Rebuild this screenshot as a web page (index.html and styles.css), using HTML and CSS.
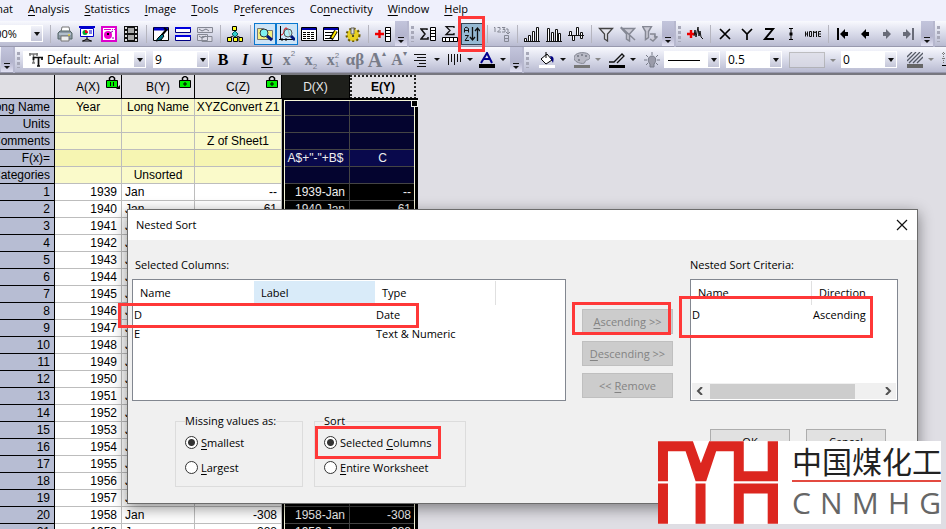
FILE: index.html
```html
<!DOCTYPE html>
<html lang="en">
<head>
<meta charset="utf-8">
<title>Nested Sort</title>
<link rel="stylesheet" href="styles.css">
</head>
<body>
<div class="app">
<nav class="menu">
<a href="#">Format</a><a href="#"><u>A</u>nalysis</a><a href="#"><u>S</u>tatistics</a><a href="#"><u>I</u>mage</a><a href="#"><u>T</u>ools</a><a href="#">P<u>r</u>eferences</a><a href="#">Co<u>n</u>nectivity</a><a href="#"><u>W</u>indow</a><a href="#"><u>H</u>elp</a>
</nav>

<div class="bars">
<div class="bar bar-zoom">
<label class="combo zoom"><select aria-label="Zoom"><option>100%</option></select></label>
<i class="sep wide"></i>
<button class="tb" aria-label="Print"><svg viewBox="0 0 16 16"><path d="M5 1h7l1 5H4z" fill="#fff" stroke="#777"/><path d="M1 7l2-2h10l2 2v6H1z" fill="#8c99a6" stroke="#566"/><path d="M2 8h12" stroke="#d8e4ee"/><path d="M4 10h8v5H4z" fill="#eee" stroke="#777"/><path d="M11 9h2" stroke="#fd0"/></svg></button>
<button class="tb" aria-label="Slide show"><svg viewBox="0 0 16 16"><path d="M0 1h16" stroke="#00c" stroke-width="2"/><path d="M1.500 2.500h13v8h-13z" fill="#fff" stroke="#00c"/><circle cx="6" cy="6.500" r="2.500" fill="#0a3"/><path d="M6 4v3h3a3 3 0 0 0-3-3" fill="#e02"/><path d="M10 5h3M10 7h3" stroke="#00c"/><path d="M8 11v2M4 15l4-2 4 2M3 15h10" stroke="#000" fill="none"/></svg></button>
<button class="tb" aria-label="Open graph"><svg viewBox="0 0 16 16"><path d="M1 1h14v14H1z" fill="#fff" stroke="#d0c" stroke-width="2"/><path d="M3 3.500h7M11 3.500h1M13 3.500h1" stroke="#d0c"/><circle cx="7" cy="9" r="4" fill="#e0c"/><path d="M6 7h2v2H6z" fill="#000"/><path d="M9 7l3-2M11 12h2" stroke="#80a"/></svg></button>
<button class="tb" aria-label="Video"><svg viewBox="0 0 16 16"><path d="M1 0h14v16H1z" fill="#111"/><path d="M5 2h6v5H5zM5 9h6v5H5z" fill="#aaa"/><path d="M3 1v14M13 1v14" stroke="#ddd" stroke-width="2" stroke-dasharray="2 2"/></svg></button>
<i class="sep"></i>
<button class="tb" aria-label="Edit"><svg viewBox="0 0 16 16"><path d="M.5 1.500h15v13H.5z" fill="#fff" stroke="#000"/><path d="M1 3h14" stroke="#00c" stroke-width="3"/><path d="M14 3L9 9M11 2l3 2" stroke="#000" stroke-width="2"/><path d="M9 8l2 2-3 4-5 1 2-3z" fill="#078" stroke="#000"/></svg></button>
<button class="tb" aria-label="Split"><svg viewBox="0 0 16 16"><path d="M.5 1.500h15v5H.5zM.5 9.500h15v5H.5z" fill="#fff" stroke="#000080"/><path d="M0 2h16M0 10h16" stroke="#00d" stroke-width="2"/></svg></button>
<button class="tb" aria-label="Duplicate"><svg viewBox="0 0 16 16"><path d="M.5 1.500h15v5H.5zM.5 8.500h10v6H.5zM5 10.500h10v5H5z" fill="#dddde8" stroke="#858894"/><path d="M2 3l3 2 4-2 3 2M2 10l3 2 4-2" fill="none" stroke="#777b88"/></svg></button>
<i class="sep"></i>
<button class="tb" aria-label="Hierarchy"><svg viewBox="0 0 16 16"><path d="M8 4v5M8 9L2 12M8 9l6 3M8 9v4" stroke="#000"/><path d="M5.500.5h4v4h-4zM.5 11.500h4v4h-4zM6.500 11.500h4v4h-4zM12 11.500h3.500v4H12z" fill="#ffff20" stroke="#000"/><path d="M8 5l3 3-3 3-3-3z" fill="#3cc" stroke="#066"/></svg></button>
<i class="sep"></i>
<button class="tb active" aria-label="Project explorer"><svg viewBox="0 0 16 16"><path d="M.5 2.500h6l1 2h8v9H.5z" fill="#f4f080" stroke="#777"/><circle cx="7" cy="7" r="4" fill="#7ef0f0" stroke="#333"/><path d="M10 10l5 4" stroke="#00147c" stroke-width="3"/></svg></button>
<button class="tb active" aria-label="Quick plot"><svg viewBox="0 0 16 16"><path d="M1.500 0v14M0 13.500h14M3 12v3M7 12v3" stroke="#000"/><path d="M2 9c4 0 2-7 5-7s3 7 4 8" fill="none" stroke="#d00"/><circle cx="9" cy="7" r="4" fill="#a7f5f5" fill-opacity=".7" stroke="#555"/><path d="M12 10l4 4" stroke="#00147c" stroke-width="3"/></svg></button>
<button class="tb" aria-label="Results log"><svg viewBox="0 0 16 16"><path d="M.5 1.500h15v13H.5z" fill="#fff" stroke="#000"/><path d="M1 3h14" stroke="#00a" stroke-width="2"/><path d="M2 6.500h12M2 8.500h12M2 10.500h12M2 12.500h12" stroke="#000" stroke-dasharray="3 1"/></svg></button>
<button class="tb" aria-label="Script window"><svg viewBox="0 0 16 16"><path d="M.5 1.500h15v13H.5z" fill="#fff" stroke="#000"/><path d="M1 3h14" stroke="#00a" stroke-width="2"/><path d="M2 6.500h9M2 9.500h7M2 12.500h6" stroke="#000"/><path d="M13 5L8 13" stroke="#000" stroke-width="4"/><path d="M13 5l-4 7" stroke="#ffe600" stroke-width="2"/></svg></button>
<button class="tb" aria-label="Code builder"><svg viewBox="0 0 16 16"><circle cx="8" cy="9" r="6" fill="#e4cc18" stroke="#6b5b00" stroke-width="3" stroke-dasharray="2 2"/><circle cx="8" cy="9" r="5.500" fill="#e8d020"/><path d="M6 2h3v6H6z" fill="#ddd" stroke="#666"/><circle cx="8" cy="10" r="1" fill="#222"/></svg></button>
<i class="sep"></i>
<button class="tb" aria-label="Add column"><svg viewBox="0 0 16 16"><path d="M0 8h9M4.500 4v8" stroke="#e00" stroke-width="2.400"/><path d="M10.500 1.500h5v14h-5zM10 4.500h6M10 7.500h6M10 10.500h6" fill="#fff" stroke="#000"/></svg></button>
<button class="more" aria-label="More"></button>
</div>
<div class="bar">
<i class="grip"></i>
<button class="tb" aria-label="Column statistics"><svg viewBox="0 0 16 16"><path d="M7 4V3H1l4 5-4 5h7v-2" fill="none" stroke="#111" stroke-width="1.500"/><path d="M10.500 1.500h5v13h-5zM10 4.500h6M10 7.500h6M10 10.500h6" fill="#fff" stroke="#000"/></svg></button>
<button class="tb" aria-label="Row statistics"><svg viewBox="0 0 16 16"><path d="M12 2V.5H4l4 4-4 4h8V7" fill="none" stroke="#111" stroke-width="1.300"/><path d="M.5 11.500h15v4H.5zM3.500 11v5M7.500 11v5M11.500 11v5" fill="#fff" stroke="#000"/></svg></button>
<button class="tb pressed" aria-label="Sort"><svg viewBox="0 0 16 16" fill="none" stroke="#111"><path d="M.5 6.500V2.500L2 1l2.500 1.500V6.500M1 4.500h3M1 9.500h3.500L1 14.500h4"/><path d="M8.500 1v13M6 11l2.500 3 2.500-3M13.500 15V2M11 5l2.500-3L16 5" stroke-width="1.300"/></svg></button>
<i class="sep"></i>
<button class="tb" aria-label="Set row numbers"><svg viewBox="0 0 16 16" fill="none" stroke="#858894"><path d="M0 1.500h1V6M3.500 1.500H6v2L3.500 6H7M8 1.500h3L9 3.500h2V6H8M12 3h2v4M12 6l2 2 2-2M10.500 9.500h4v6h-4zM10 12.500h5"/></svg></button>
<i class="sep"></i>
<button class="tb" aria-label="Sort ascending"><svg viewBox="0 0 16 16" fill="#fff" stroke="#111"><path d="M0 15.500h16M.5 12.500h2v3h-2zM4.500 9.500h2v6h-2zM8.500 5.500h2v10h-2zM12.500 1.500h2v14h-2z"/></svg></button>
<button class="tb" aria-label="Column plot"><svg viewBox="0 0 16 16" fill="#fff" stroke="#111"><path d="M0 15.500h16M1.500 2.500h2v13h-2zM5.500 6.500h2v9h-2zM9.500 3.500h2v12h-2zM12.500 7.500h2v8h-2z"/></svg></button>
<button class="tb" aria-label="Normalize"><svg viewBox="0 0 16 16" fill="#fff" stroke="#111"><path d="M0 9.500h16M1.500 5.500h2v4h-2zM4.500 9.500h2v5h-2zM8.500 1.500h2v8h-2zM12.500 6.500h2v6h-2z"/></svg></button>
<i class="sep"></i>
<button class="tb" aria-label="Filter"><svg viewBox="0 0 16 16"><path d="M1.500 2.500h13L9.500 8v7l-3-2V8z" fill="#e4e4ec" stroke="#444" stroke-width="1.300"/></svg></button>
<button class="tb" aria-label="Disable filter"><svg viewBox="0 0 16 16"><path d="M1.500 2.500h13L9.500 8v7l-3-2V8zM1 1l14 13" fill="#ccccd7" stroke="#858894" stroke-width="1.500"/></svg></button>
<button class="tb" aria-label="Reapply filter"><svg viewBox="0 0 16 16"><path d="M.5.5h9l-3 5v6l-3 2v-8zM8 8h5v4M8 13l3 2 4-4-3-1" fill="#ccccd7" stroke="#858894" stroke-width="1.500"/></svg></button>
<button class="more" aria-label="More"></button>
</div>
<div class="bar">
<i class="grip"></i>
<button class="tb" aria-label="Add plot"><svg viewBox="0 0 16 16"><path d="M0 8h8M4 4v8" stroke="#e00" stroke-width="2.400"/><path d="M7 10l1-6 1 7 2-10 1 9 1-5 1 6 2 2" fill="none" stroke="#111"/></svg></button>
<i class="sep"></i>
<button class="tb" aria-label="Set as X"><svg viewBox="0 0 16 16"><path d="M3 3l10 10M13 3L3 13" stroke="#000" stroke-width="1.700"/></svg></button>
<button class="tb" aria-label="Set as Y"><svg viewBox="0 0 16 16"><path d="M3 3l5 5 5-5M8 8v6" fill="none" stroke="#000" stroke-width="1.700"/></svg></button>
<button class="tb" aria-label="Set as Z"><svg viewBox="0 0 16 16"><path d="M4 3h8L4 13h9" fill="none" stroke="#000" stroke-width="2"/></svg></button>
<button class="tb" aria-label="Set as error"><svg viewBox="0 0 16 16"><path d="M6 2.500h4M8 3v10M6 13.500h4" stroke="#000"/><path d="M6.500 6.500h3v3h-3z"/></svg></button>
<button class="tb" aria-label="Home"><svg viewBox="0 0 16 16" fill="none" stroke="#111"><path d="M.5 5.500v5M0 8h3M2.500 5.500v5M4.500 5.500h2v5h-2zM8.500 11V5l1.500 2 1.500-2v6M16 5.500h-2.500v5H16M14 8h2"/></svg></button>
<i class="sep"></i>
<button class="tb" aria-label="First"><svg viewBox="0 0 16 16"><path d="M2 2h2v12H2zM5 8l5-5v3h3v4h-3v3z"/></svg></button>
<button class="tb" aria-label="Previous"><svg viewBox="0 0 16 16"><path d="M4 8l5-5v3h3v4H9v3z"/></svg></button>
<button class="tb" aria-label="Next"><svg viewBox="0 0 16 16"><path d="M12 8L7 3v3H4v4h3v3z" fill="#686b78"/></svg></button>
<button class="tb" aria-label="Last"><svg viewBox="0 0 16 16"><path d="M10 8L5 3v3H2v4h3v3zM11 2h2v12h-2z" fill="#686b78"/></svg></button>
<button class="more" aria-label="More"></button>
</div>
<div class="bar grow"><i class="grip"></i></div>
</div>

<div class="bars">
<div class="bar"><button class="more" aria-label="More"></button></div>
<div class="bar">
<i class="grip"></i>
<label class="combo font"><svg viewBox="0 0 14 14"><path d="M0 1h9M4.500 1v9M1 0v3M8 0v3M3 10h3" stroke="#777" stroke-width="1.500"/><path d="M4 4.500h10M9.500 4v9M4.500 4v3M13 4v3M8 13h3" stroke="#111" stroke-width="1.700"/></svg><select aria-label="Font"><option>Default: Arial</option></select></label>
<label class="combo size"><select aria-label="Font size"><option>9</option></select></label>
<button class="tb fmt"><b>B</b></button>
<button class="tb fmt"><b><em>I</em></b></button>
<button class="tb fmt"><b><u>U</u></b></button>
<button class="tb fmt dim">x<sup>2</sup></button>
<button class="tb fmt dim">x<sub>2</sub></button>
<button class="tb fmt dim">x<span class="stack"><i>2</i><i>1</i></span></button>
<button class="tb fmt dim greek">αβ</button>
<button class="tb fmt dim big">A<sup>▴</sup></button>
<button class="tb fmt dim">A<sup>▾</sup></button>
<button class="tb drop" aria-label="Align"><svg viewBox="0 0 16 16"><path d="M1 2.500h12M4 5.500h9M1 8.500h12M6 11.500h7M4 14.500h9" stroke="#111"/></svg></button>
<button class="tb drop" aria-label="Rotate"><svg viewBox="0 0 16 16"><path d="M2.500 2v11M5.500 2v8M8.500 2v11M11.500 2v8M14.500 2v8" stroke="#111"/></svg></button>
<button class="tb drop" aria-label="Font colour"><svg viewBox="0 0 16 16"><path d="M2 11L8 1l5 10M4 7h7" fill="none" stroke="#000090" stroke-width="2"/><path d="M0 12h16v4H0z"/></svg></button>
<button class="more" aria-label="More"></button>
</div>
<div class="bar grow">
<i class="grip"></i>
<button class="tb drop" aria-label="Fill colour"><svg viewBox="0 0 16 16"><path d="M2 7l6-5 5 6-6 4z" fill="#fff" stroke="#000"/><path d="M7 6V0" stroke="#000"/><path d="M11 4c4 0 4 3 3 7l-2-4z" fill="#000080"/><path d="M0 13h16v3H0z" fill="#fff"/></svg></button>
<button class="tb drop off" aria-label="Palette"><svg viewBox="0 0 16 16"><path d="M0 6C0-1 16-1 16 5c0 4-5 2-5 5S0 11 0 6z" fill="#b9bac6" stroke="#858894"/><path d="M3 4h2M7 3h2M11 4h2M4 8h2" stroke="#858894" stroke-width="2"/><path d="M0 13h16v3H0z" fill="#777"/></svg></button>
<button class="tb drop" aria-label="Line colour"><svg viewBox="0 0 16 16"><path d="M0 10h5l8-8 2 2-7 7" fill="none" stroke="#111" stroke-width="1.300"/><path d="M0 13h16v3H0z"/></svg></button>
<button class="tb" aria-label="Lighting"><svg viewBox="0 0 16 16"><path d="M8 0v3M0 8h3M13 8h3M2 3l2 2M14 3l-2 2M2 13l2-2M14 13l-2-2" stroke="#777b88"/><path d="M6 12C3 9 4 4 8 4s5 5 2 8v3H6z" fill="#9a9ba9" stroke="#777b88"/></svg></button>
<label class="combo line"><svg viewBox="0 0 32 2"><path d="M0 1.500h32" stroke="#000"/></svg><select aria-label="Line style"><option></option></select></label>
<label class="combo num"><select aria-label="Line width"><option>0.5</option></select></label>
<label class="swatch"><select aria-label="Pattern colour" disabled><option></option></select></label>
<label class="combo num"><select aria-label="Pattern width"><option>0</option></select></label>
<button class="tb drop off" aria-label="Pattern"><svg viewBox="0 0 16 16"><path d="M0 5l5-5M0 9l9-9M2 11L13 0M6 11l10-10M10 11l6-6" stroke="#555a66" stroke-width="1.300"/><path d="M0 12h16v4H0z" fill="#666"/></svg></button>
<button class="tb" aria-label="Borders"><svg viewBox="0 0 16 16"><path d="M0 1.500h16M0 6.500h16M1.500 0v12M6.500 0v12M11.500 0v12" stroke="#777" stroke-dasharray="1 1"/><path d="M0 13.500h16" stroke="#000"/></svg></button>
</div>
</div>

<main class="sheet">
<div class="grid">
<table>
<colgroup><col class="c-head"><col class="c-a"><col class="c-b"><col class="c-c"><col class="c-d"><col class="c-e"></colgroup>
<thead><tr><th></th>
<th>A(X)<svg class="lock" viewBox="0 0 14 13"><path d="M3.500 5V2l2-1.500h1l2 1.500v3" fill="none" stroke="#000" stroke-width="1.500"/><path d="M.5 4.500h11v7H.5z" fill="#0e0" stroke="#000"/><path d="M4.500 6v4M7.500 6v4" stroke="#000"/><path d="M14 9v4h-4z"/></svg></th>
<th>B(Y)<svg class="lock" viewBox="0 0 14 13"><path d="M3.500 5V2l2-1.500h1l2 1.500v3" fill="none" stroke="#000" stroke-width="1.500"/><path d="M.5 4.500h11v7H.5z" fill="#0e0" stroke="#000"/><path d="M6 6v4M4 8h4" stroke="#000"/></svg></th>
<th>C(Z)<svg class="lock" viewBox="0 0 14 13"><path d="M3.500 5V2l2-1.500h1l2 1.500v3" fill="none" stroke="#000" stroke-width="1.500"/><path d="M.5 4.500h11v7H.5z" fill="#0e0" stroke="#000"/><path d="M6 6v4M4 8h4" stroke="#000"/></svg></th>
<th class="picked">D(X)</th><th class="current">E(Y)</th></tr></thead>
<tbody class="meta">
<tr><th>Long Name</th><td>Year</td><td>Long Name</td><td>XYZConvert Z1</td><td></td><td></td></tr>
<tr><th>Units</th><td></td><td></td><td></td><td></td><td></td></tr>
<tr><th>Comments</th><td></td><td></td><td>Z of Sheet1</td><td></td><td></td></tr>
<tr class="fx"><th>F(x)=</th><td></td><td></td><td></td><td>A$+"-"+B$</td><td>C</td></tr>
<tr><th>Categories</th><td></td><td>Unsorted</td><td></td><td></td><td></td></tr>
</tbody>
<tbody class="data">
<tr><th>1</th><td>1939</td><td>Jan</td><td>--</td><td>1939-Jan</td><td>--</td></tr>
<tr><th>2</th><td>1940</td><td>Jan</td><td>61</td><td>1940-Jan</td><td>61</td></tr>
<tr><th>3</th><td>1941</td><td>Jan</td><td></td><td></td><td></td></tr>
<tr><th>4</th><td>1942</td><td>Jan</td><td></td><td></td><td></td></tr>
<tr><th>5</th><td>1943</td><td>Jan</td><td></td><td></td><td></td></tr>
<tr><th>6</th><td>1944</td><td>Jan</td><td></td><td></td><td></td></tr>
<tr><th>7</th><td>1945</td><td>Jan</td><td></td><td></td><td></td></tr>
<tr><th>8</th><td>1946</td><td>Jan</td><td></td><td></td><td></td></tr>
<tr><th>9</th><td>1947</td><td>Jan</td><td></td><td></td><td></td></tr>
<tr><th>10</th><td>1948</td><td>Jan</td><td></td><td></td><td></td></tr>
<tr><th>11</th><td>1949</td><td>Jan</td><td></td><td></td><td></td></tr>
<tr><th>12</th><td>1950</td><td>Jan</td><td></td><td></td><td></td></tr>
<tr><th>13</th><td>1951</td><td>Jan</td><td></td><td></td><td></td></tr>
<tr><th>14</th><td>1952</td><td>Jan</td><td></td><td></td><td></td></tr>
<tr><th>15</th><td>1953</td><td>Jan</td><td></td><td></td><td></td></tr>
<tr><th>16</th><td>1954</td><td>Jan</td><td></td><td></td><td></td></tr>
<tr><th>17</th><td>1955</td><td>Jan</td><td></td><td></td><td></td></tr>
<tr><th>18</th><td>1956</td><td>Jan</td><td></td><td></td><td></td></tr>
<tr><th>19</th><td>1957</td><td>Jan</td><td></td><td></td><td></td></tr>
<tr><th>20</th><td>1958</td><td>Jan</td><td>-308</td><td>1958-Jan</td><td>-308</td></tr>
<tr><th>21</th><td>1959</td><td>Jan</td><td>-288</td><td>1959-Jan</td><td>-288</td></tr>
</tbody>
</table>
<div class="selection"></div>
</div>
</main>

<section class="dialog" role="dialog" aria-label="Nested Sort">
<header><span>Nested Sort</span><button aria-label="Close"><svg viewBox="0 0 12 12"><path d="M1 1l10 10M11 1L1 11" stroke="#111" stroke-width="1.200"/></svg></button></header>
<div class="upper">
<div class="pane from">
<h2>Selected Columns:</h2>
<div class="list"><table><thead><tr><th>Name</th><th class="hot">Label</th><th class="edge">Type</th><th></th></tr></thead>
<tbody><tr><td>D</td><td></td><td>Date</td><td></td></tr><tr><td>E</td><td></td><td>Text &amp; Numeric</td><td></td></tr></tbody></table></div>
</div>
<div class="moves">
<button disabled><u>A</u>scending &gt;&gt;</button>
<button disabled><u>D</u>escending &gt;&gt;</button>
<button disabled>&lt;&lt; <u>R</u>emove</button>
</div>
<div class="pane to">
<h2>Nested Sort Criteria:</h2>
<div class="list"><table><thead><tr><th class="edge">Name</th><th>Direction</th></tr></thead>
<tbody><tr><td>D</td><td>Ascending</td></tr></tbody></table>
<div class="scroll"><svg viewBox="0 0 8 8"><path d="M6 0L2 4l4 4" fill="none" stroke="#505050" stroke-width="2"/></svg><i></i><svg viewBox="0 0 8 8"><path d="M2 0l4 4-4 4" fill="none" stroke="#505050" stroke-width="2"/></svg></div>
</div>
</div>
</div>
<div class="lower">
<fieldset class="missing"><legend>Missing values as:</legend>
<label><input type="radio" name="missing" checked><span><u>S</u>mallest</span></label>
<label><input type="radio" name="missing"><span><u>L</u>argest</span></label></fieldset>
<fieldset class="scope"><legend>Sort</legend>
<label><input type="radio" name="scope" checked><span>Selected <u>C</u>olumns</span></label>
<label><input type="radio" name="scope"><span><u>E</u>ntire Worksheet</span></label></fieldset>
<div class="actions"><button>OK</button><button>Cancel</button></div>
</div>
</section>

<i class="mark m-sort"></i><i class="mark m-row"></i><i class="mark m-asc"></i><i class="mark m-criteria"></i><i class="mark m-scope"></i>

<div class="brand">
<svg viewBox="0 0 361 248"><path fill="#dc261f" d="M0 0h105l24 66 25-66h104v90h72V0h31v120H228V30h-53l-30 90h-32L83 30H30v90H0zM0 127h30v121H0zM113 127h30v121h-30zM228 127h133v121h-31v-91h-72v91h-30z"/></svg>
<div class="brand-name"><strong lang="zh">中国煤化工</strong><div class="latin"><span>C</span><span>N</span><span>M</span><span>H</span><span>G</span></div></div>
</div>
</div>
</body>
</html>
```
FILE: styles.css
```css
* { box-sizing: border-box; }
body { margin: 0; font: 11px/16px "Open Sans", "Noto Sans", sans-serif; color: #000; }
.app { position: relative; display: flex; flex-direction: column; height: 100vh; overflow: hidden; background: #dfdee4; }
button, select, input { font: inherit; color: inherit; }
u { text-underline-offset: 2px; }

.menu { display: flex; gap: 15px; flex: none; height: 21px; padding-top: 1px; margin-left: -24px; background: #eff0fc; }
.menu a { color: #000; text-decoration: none; }

.bars { display: flex; flex: none; height: 26px; background: #b7b8cf; }
.bar { display: flex; flex: none; align-items: center; background: linear-gradient(#f8f9fe, #d9dbea 50%, #b9bbd1); border-bottom: 1px solid #9899ae; margin-right: 2px; }
.bar.grow { flex: 1 0 0; min-width: 0; margin-right: 0; }
.grip { flex: none; width: 3px; height: 16px; margin: 0 3px 0 2px; background: repeating-linear-gradient(#a7a8b8 0 3px, transparent 3px 5px); }
.grow .grip { margin-right: 7px; }
.sep { width: 8px; height: 18px; background: linear-gradient(90deg, transparent 4px, #b5b5bf 4px 5px, transparent 5px); }
.sep.wide { margin: 0 0 0 3px; }
.tb { display: flex; flex: none; align-items: center; justify-content: center; width: 22px; height: 22px; padding: 0; border: 0; background: none; }
.tb svg { flex: none; width: 16px; height: 16px; }
.tb.active { border: 1px solid #0a78d0; background: #cde4f6; }
.tb.pressed { border: 1px solid #345; background: #96b9d3; }
.drop { width: 33px; justify-content: flex-start; padding-left: 3px; gap: 5px; }
.grow .drop { width: 35px; }
.drop::after { content: ""; border: 3px solid transparent; border-top-color: #111; border-bottom: 0; }
.drop.off::after { border-top-color: #888; }
.more { position: relative; width: 12px; height: 25px; margin-left: 1px; padding: 0; border: 0; background: linear-gradient(#c3c5dc, #b3b4cd 60%, #e0e0f2); }
.more::after { content: ""; position: absolute; left: 3px; bottom: 3px; width: 6px; height: 6px; background: linear-gradient(#111 0 1px, transparent 1px 3px, #111 3px); clip-path: polygon(0 0, 100% 0, 100% 50%, 50% 100%, 0 50%); }
.combo { position: relative; display: flex; flex: none; align-items: center; height: 17px; background: #fff; }
.combo select { width: 100%; height: 17px; padding: 0 0 0 2px; border: 0; background: none; appearance: none; font-size: 12px; line-height: 16px; }
.combo::after { content: ""; position: absolute; right: 1px; top: 1px; bottom: 1px; width: 11px; background: linear-gradient(#f2f3fa, #c4c6d8); }
.combo::before { content: ""; position: absolute; z-index: 1; right: 3px; top: 7px; border: 3px solid transparent; border-top: 4px solid #111; border-bottom: 0; }
.zoom { width: 54px; margin-left: -11px; }
.combo.zoom select { padding-left: 0; font-size: 11px; }
.font { width: 123px; margin-right: 7px; padding-left: 6px; }
.font svg { width: 14px; height: 14px; flex: none; }
.combo.font select { padding-left: 4px; }
.size { width: 56px; margin-right: 3px; }
.line { width: 56px; margin: 0 6px 0 1px; padding-left: 4px; }
.line svg { width: 32px; height: 2px; flex: none; }
.line select { min-width: 0; }
.num { width: 56px; margin-right: 7px; }
.swatch { position: relative; flex: none; width: 46px; margin-right: 6px; }
.swatch select { display: block; width: 36px; height: 16px; border: 1px solid #aaa; background: #dcdce6; appearance: none; }
.swatch::after { content: ""; position: absolute; right: -1px; top: 7px; border: 3px solid transparent; border-top-color: #888; border-bottom: 0; }
.fmt { font: 16px/20px "Liberation Serif", serif; }
.fmt.dim { color: #777b88; font-weight: bold; }
.fmt.big { font-size: 20px; }
.fmt.greek { font-size: 17px; }
.fmt sup, .fmt sub, .stack { font: 8px/9px "Liberation Sans", sans-serif; }
.fmt sup { align-self: flex-start; }
.fmt sub { align-self: flex-end; }
.stack { display: flex; flex-direction: column; }
.stack i { font-style: normal; }

.sheet { flex: 1; min-height: 0; overflow: hidden; border-top: 2px solid #77777f; font: 12px/16px "Liberation Sans", sans-serif; }
.grid { position: relative; width: 452px; margin-left: -35px; }
.grid table { table-layout: fixed; width: 451px; border-spacing: 0; }
.c-head { width: 90px; } .c-a { width: 67px; } .c-b { width: 73px; } .c-c { width: 87px; } .c-d { width: 68px; } .c-e { width: 66px; }
.grid th, .grid td { height: 17px; padding: 0 4px; overflow: hidden; white-space: nowrap; border-right: 1px solid #bdbdbd; border-bottom: 1px solid #bdbdbd; font-weight: normal; }
.grid thead th { position: relative; height: 24px; background: #e0dfe4; border-color: #000; }
.grid tbody th { background: #b7bdd3; text-align: right; border-color: #000; }
.grid thead .picked { background: #1e1f1b; color: #e8e8e8; }
.grid thead .current { border: 2px dotted #222; font-weight: bold; }
.lock { position: absolute; top: 1px; right: 1px; width: 14px; height: 13px; }
.meta td { background: #fafaca; text-align: center; }
.grid .meta td { padding: 0; }
.meta .fx td { background: #f6f5b2; }
.data td { background: #fff; text-align: right; }
.grid .data td:nth-child(3) { text-align: left; padding-left: 3px; }
.grid td:nth-child(n+5) { border-color: #444; color: #eee; }
.meta td:nth-child(n+5) { background: #04042f; }
.meta .fx td:nth-child(n+5) { background: #09094c; }
.data td:nth-child(n+5) { background: #000; }
.selection { position: absolute; left: 317px; top: 23px; bottom: -20px; width: 136px; border: 2px solid #000; border-right-width: 3px; box-shadow: inset 0 0 0 1px #f5f5d8; }
.selection::after { content: ""; position: absolute; right: -3px; top: 0; width: 5px; height: 5px; background: #000; border: 1px solid #eee; }

.dialog { position: absolute; left: 127px; top: 209px; width: 791px; height: 295px; border: 1px solid #6c6c6c; background: #f0f0f0; box-shadow: 0 4px 14px rgba(0, 0, 0, .45); }
.dialog header { display: flex; align-items: center; justify-content: space-between; height: 30px; padding: 0 9px 0 8px; background: #fff; }
.dialog header button { width: 12px; height: 12px; padding: 0; border: 0; background: none; display: flex; }
.dialog h2 { margin: 0 0 6px; font-size: 11px; line-height: 16px; font-weight: normal; }
.dialog .from h2 { padding-left: 3px; }
.upper { display: flex; padding: 17px 19px 0 4px; }
.from { width: 434px; }
.to { width: 208px; }
.list { display: flex; flex-direction: column; justify-content: space-between; height: 122px; padding: 1px 0; border: 1px solid #828790; background: #fff; }
.list table { table-layout: fixed; width: 100%; border-spacing: 0; }
.list th, .list td { height: 19px; padding: 0 0 0 1px; text-align: left; font-weight: normal; white-space: nowrap; overflow: hidden; line-height: 16px; }
.list th { height: 24px; width: 121px; padding-left: 7px; }
.list th:last-child { width: auto; }
.list .hot { background: #d9ebf9; }
.list .edge { border-right: 1px solid #e0e0e0; }
.moves { display: flex; flex-direction: column; gap: 7px; width: 91px; margin: 52px 17px 0 16px; }
.moves button { height: 25px; padding: 0; border: 1px solid #bfbfbf; background: #ccc; color: #838383; }
.scroll { display: flex; align-items: center; justify-content: space-between; height: 16px; margin: 0 1px; padding: 0 4px; background: #f0f0f0; }
.scroll svg { width: 8px; height: 8px; }
.scroll i { width: 145px; height: 15px; margin-right: 24px; background: #cdcdcd; }
.lower { display: flex; align-items: flex-start; padding: 12px 31px 0 47px; }
fieldset { height: 74px; margin: 0; padding: 1px 9px 0; border: 1px solid #dcdcdc; }
legend { padding: 0; line-height: 16px; }
.missing { width: 128px; }
.scope { width: 152px; margin-left: 11px; }
fieldset label { display: flex; align-items: center; gap: 3px; height: 25px; white-space: nowrap; }
fieldset input { appearance: none; width: 13px; height: 13px; margin: 0; border: 1px solid #333; border-radius: 50%; background: #fff; }
fieldset input:checked { background: radial-gradient(circle, #333 3px, #fff 4px); }
.actions { display: flex; gap: 16px; margin: 16px 0 0 auto; }
.actions button { width: 80px; height: 25px; padding: 0; border: 1px solid #adadad; background: #e1e1e1; }

.mark { position: absolute; border: 3px solid #ff3838; }
.m-sort { left: 458px; top: 16px; width: 27px; height: 36px; }
.m-row { left: 118px; top: 303px; width: 301px; height: 25px; }
.m-asc { left: 572px; top: 302px; width: 99px; height: 33px; }
.m-criteria { left: 679px; top: 296px; width: 194px; height: 42px; }
.m-scope { left: 315px; top: 426px; width: 126px; height: 33px; }

.brand { position: absolute; left: 658px; top: 441px; display: flex; gap: 14px; width: 283px; height: 83px; background: #fff; overflow: hidden; }
.brand svg { width: 120px; height: 83px; flex: none; }
.brand-name { flex: 1; min-width: 0; }
.brand-name strong { display: block; height: 41px; border-bottom: 2px solid #e34a40; font: 400 30px/38px "Noto Sans CJK SC", sans-serif; color: #222; white-space: nowrap; }
.latin { display: flex; justify-content: space-between; font-size: 30px; line-height: 42px; color: #666; }
```
